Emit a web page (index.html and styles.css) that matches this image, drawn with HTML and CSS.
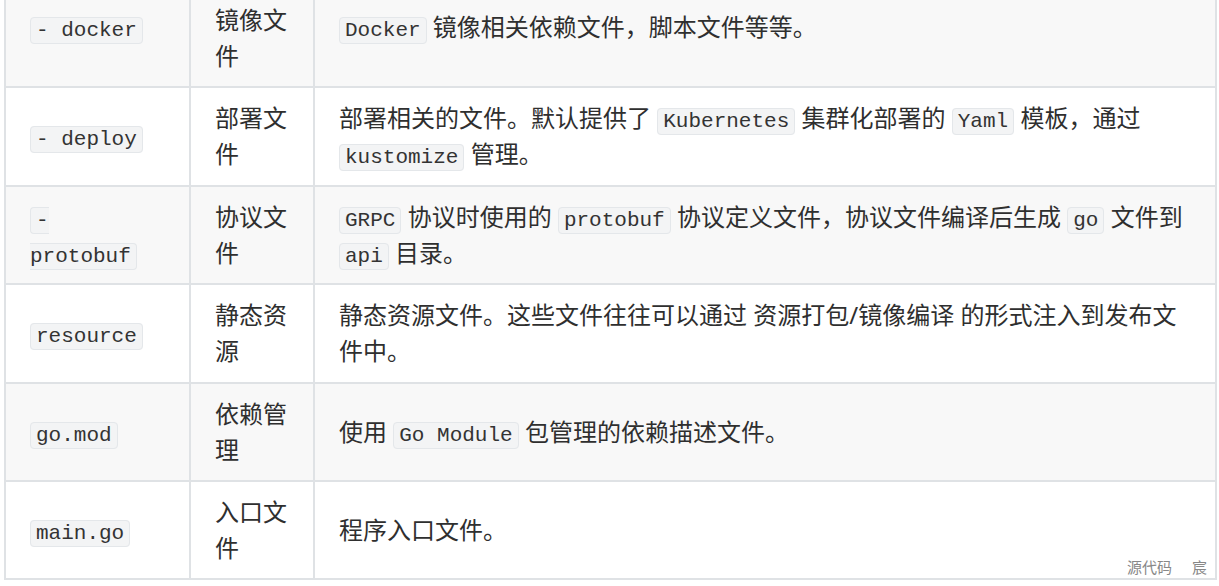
FILE: index.html
```html
<!DOCTYPE html>
<html lang="zh-CN">
<head>
<meta charset="utf-8">
<title>目录结构</title>
<link rel="stylesheet" href="styles.css">
</head>
<body>
<div class="page">
  <table class="dirs">
    <colgroup>
      <col class="c-name">
      <col class="c-type">
      <col class="c-desc">
    </colgroup>
    <tbody>
      <tr class="first">
        <td><code>- docker</code></td>
        <td class="type">镜像文件</td>
        <td><code>Docker</code> 镜像相关依赖文件，脚本文件等等。</td>
      </tr>
      <tr>
        <td><code>- deploy</code></td>
        <td class="type">部署文件</td>
        <td>部署相关的文件。默认提供了 <code>Kubernetes</code> 集群化部署的 <code>Yaml</code> 模板，通过 <code>kustomize</code> 管理。</td>
      </tr>
      <tr>
        <td><code>- protobuf</code></td>
        <td class="type">协议文件</td>
        <td><code>GRPC</code> 协议时使用的 <code>protobuf</code> 协议定义文件，协议文件编译后生成 <code>go</code> 文件到 <code>api</code> 目录。</td>
      </tr>
      <tr>
        <td><code>resource</code></td>
        <td class="type">静态资源</td>
        <td>静态资源文件。这些文件往往可以通过 资源打包/镜像编译 的形式注入到发布文件中。</td>
      </tr>
      <tr>
        <td><code>go.mod</code></td>
        <td class="type">依赖管理</td>
        <td>使用 <code>Go Module</code> 包管理的依赖描述文件。</td>
      </tr>
      <tr>
        <td><code>main.go</code></td>
        <td class="type">入口文件</td>
        <td>程序入口文件。</td>
      </tr>
    </tbody>
  </table>
  <div class="watermark"><span>源代码</span><span class="wm-name">宸</span></div>
</div>
</body>
</html>
```

FILE: styles.css
```css
html, body {
  margin: 0;
  padding: 0;
  background: #ffffff;
}

body {
  font-family: "Noto Sans", "Noto Sans CJK SC", sans-serif;
  color: #2f2f2f;
  font-size: 24px;
  line-height: 36px;
  overflow: hidden;
}

.page {
  position: relative;
  display: flow-root;
  padding: 0 4px;
  height: 586px;
}

.dirs {
  border-collapse: collapse;
  table-layout: fixed;
  width: 1211px;
  margin-top: -35px;
}

.c-name { width: 185px; }
.c-type { width: 124px; }
.c-desc { width: 902px; }

.dirs td {
  border: 2px solid #dfe2e5;
  padding: 12px 24px 12.4px;
  vertical-align: middle;
}

.dirs tr:nth-child(odd) td {
  background: #f8f8f8;
}

.dirs tr:nth-child(even) td {
  background: #ffffff;
}

.dirs tr.first td.type {
  padding-top: 35px;
}

code {
  font-family: "Liberation Mono", "Courier New", monospace;
  font-size: 21px;
  line-height: 21px;
  color: #333333;
  background: #f3f4f5;
  border: 1px solid #e4e7ea;
  border-radius: 4px;
  padding: 1px 5px;
}

.watermark {
  position: absolute;
  right: 12px;
  top: 556px;
  font-family: "Noto Sans CJK SC", sans-serif;
  font-size: 15px;
  line-height: 22px;
  color: #888888;
}

.wm-name {
  margin-left: 20px;
}
```
